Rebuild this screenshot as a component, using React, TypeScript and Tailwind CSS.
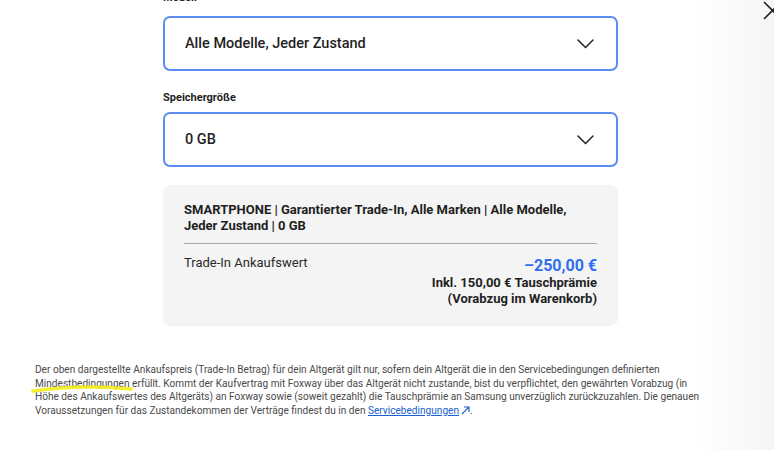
import React from "react";

const Chevron = () => (
  <svg width="17" height="10" viewBox="0 0 17 10" fill="none">
    <path d="M1 1l7.5 7.5L16 1" stroke="#222" strokeWidth="1.5" strokeLinecap="round" strokeLinejoin="round" />
  </svg>
);

const Select = ({ value }: { value: string }) => (
  <div className="flex h-[55px] items-center justify-between rounded-[7px] border-2 border-[#5a8ff0] bg-white pl-[20px] pr-[22px]">
    <span className="text-[14.5px] font-medium text-[#1f1f1f]">{value}</span>
    <Chevron />
  </div>
);

export default function App() {
  return (
    <div className="relative h-[450px] w-[774px] overflow-hidden bg-white" style={{ fontFamily: "Roboto, 'Noto Sans', sans-serif" }}>
      <div className="pointer-events-none absolute inset-y-0 right-0 w-[80px] bg-gradient-to-r from-transparent to-[#f5f5f5]" />
      <svg className="absolute left-[762px] top-0" width="24" height="22" viewBox="0 0 24 22" fill="none">
        <path d="M2 2l17 17M19 2L2 19" stroke="#222" strokeWidth="1.6" />
      </svg>

      <div className="relative ml-[163px] w-[455px]">
        <div className="-mt-[9px] text-[11px] font-bold leading-[14px] text-[#1f1f1f]">Modell</div>
        <div className="mt-[11px]">
          <Select value="Alle Modelle, Jeder Zustand" />
        </div>
        <div className="mt-[20px] text-[11px] font-bold leading-[14px] text-[#1f1f1f]">Speichergröße</div>
        <div className="mt-[7px]">
          <Select value="0 GB" />
        </div>

        <div className="mt-[18px] rounded-[8px] bg-[#f4f4f4] px-[21px] pb-[19px] pt-[17px]">
          <div className="text-[13px] font-bold leading-[16px] text-[#1f1f1f]">
            SMARTPHONE | Garantierter Trade-In, Alle Marken | Alle Modelle,
            <br />
            Jeder Zustand | 0 GB
          </div>
          <div className="mt-[9px] h-px bg-[#a9a9a9]" />
          <div className="mt-[11px] flex items-start justify-between">
            <span className="text-[13px] leading-[16px] text-[#2a2a2a]">Trade-In Ankaufswert</span>
            <div className="flex flex-col items-end">
              <span className="mt-[2px] text-[16px] font-bold leading-[18px] text-[#2e6ff0]">–250,00 €</span>
              <span className="text-[13px] font-bold leading-[16px] text-[#1f1f1f]">Inkl. 150,00 € Tauschprämie</span>
              <span className="text-[13px] font-bold leading-[16px] text-[#1f1f1f]">(Vorabzug im Warenkorb)</span>
            </div>
          </div>
        </div>
      </div>

      <div className="relative ml-[35px] mt-[37px] text-[10.1px] leading-[13.5px] text-[#4a4a4a]">
        <div className="whitespace-nowrap">Der oben dargestellte Ankaufspreis (Trade-In Betrag) für dein Altgerät gilt nur, sofern dein Altgerät die in den Servicebedingungen definierten</div>
        <div className="whitespace-nowrap">Mindestbedingungen erfüllt. Kommt der Kaufvertrag mit Foxway über das Altgerät nicht zustande, bist du verpflichtet, den gewährten Vorabzug (in</div>
        <div className="whitespace-nowrap">Höhe des Ankaufswertes des Altgeräts) an Foxway sowie (soweit gezahlt) die Tauschprämie an Samsung unverzüglich zurückzuzahlen. Die genauen</div>
        <div className="whitespace-nowrap">
          Voraussetzungen für das Zustandekommen der Verträge findest du in den{" "}
          <span className="text-[#1a5fd0] underline">Servicebedingungen</span>
          <svg className="ml-[2px] inline-block align-[-1px]" width="9" height="9" viewBox="0 0 9 9" fill="none">
            <path d="M1 8L8 1M3 1h5v5" stroke="#1a5fd0" strokeWidth="1.1" />
          </svg>
          .
        </div>
        <svg className="pointer-events-none absolute left-[-4px] top-[19px]" width="110" height="12" viewBox="0 0 110 12" fill="none">
          <path d="M2 9 Q 50 2 100 7" stroke="#f2ee1a" strokeWidth="3.5" strokeLinecap="round" opacity="0.9" />
        </svg>
      </div>
    </div>
  );
}
